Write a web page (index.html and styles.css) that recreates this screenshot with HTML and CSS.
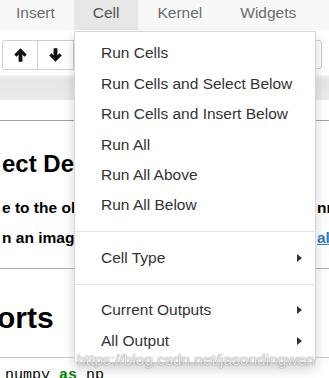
FILE: index.html
```html
<!DOCTYPE html>
<html>
<head>
<meta charset="utf-8">
<link rel="stylesheet" href="styles.css">
</head>
<body>
<div class="page">
  <nav class="menubar">
    <span class="mitem first">Insert</span>
    <span class="mitem active">Cell</span>
    <span class="mitem">Kernel</span>
    <span class="mitem">Widgets</span>
  </nav>
  <div class="toolbar">
    <div class="btn-group">
      <button class="btn btn-left" aria-label="move up">
        <svg width="13" height="14" viewBox="0 0 13 14"><path d="M6.5 0.6 L12.4 6.5 L10.5 8.4 L8.1 6 V13.4 H4.9 V6 L2.5 8.4 L0.6 6.5 Z" fill="#111" stroke="#111" stroke-width="0.6" stroke-linejoin="round"/></svg>
      </button>
      <button class="btn btn-mid" aria-label="move down">
        <svg width="13" height="14" viewBox="0 0 13 14"><path d="M6.5 13.4 L12.4 7.5 L10.5 5.6 L8.1 8 V0.6 H4.9 V8 L2.5 5.6 L0.6 7.5 Z" fill="#111" stroke="#111" stroke-width="0.6" stroke-linejoin="round"/></svg>
      </button>
    </div>
    <div class="btn-group push">
      <button class="btn btn-right" aria-label="more"></button>
    </div>
  </div>
  <div class="band"></div>
  <main class="notebook">
    <div class="cell-top"></div>
    <section class="md">
      <h2 class="title">ect Detection</h2>
      <p class="line"><span class="left">e to the object detection</span><span class="right">nn</span></p>
      <p class="line"><span class="left">n an image using</span><a class="right link" href="#">al</a></p>
    </section>
    <section class="md2">
      <h1 class="big">orts</h1>
    </section>
    <pre class="code">numpy <span class="kw">as</span> np</pre>
  </main>

  <ul class="dropdown">
    <li class="item">Run Cells</li>
    <li class="item">Run Cells and Select Below</li>
    <li class="item">Run Cells and Insert Below</li>
    <li class="item">Run All</li>
    <li class="item">Run All Above</li>
    <li class="item">Run All Below</li>
    <li class="divider"></li>
    <li class="item sub"><span>Cell Type</span><span class="caret"></span></li>
    <li class="divider"></li>
    <li class="item sub"><span>Current Outputs</span><span class="caret"></span></li>
    <li class="item sub"><span>All Output</span><span class="caret"></span></li>
  </ul>

  <div class="watermark">https://blog.csdn.net/jasondingwen</div>
</div>
</body>
</html>
```

FILE: styles.css
```css
html, body {
  margin: 0;
  padding: 0;
  background: #fff;
}
body {
  font-family: "Liberation Sans", Arial, sans-serif;
  color: #000;
  overflow: hidden;
}
.page {
  position: relative;
  width: 329px;
  height: 378px;
  overflow: hidden;
}

/* menu bar */
.menubar {
  display: flex;
  height: 30px;
  background: #f8f8f8;
  font-size: 15.5px;
  color: #6c6c6c;
}
.mitem {
  padding: 0 19px;
  line-height: 26px;
  height: 30px;
  white-space: nowrap;
}
.mitem.first {
  padding-left: 16px;
}
.mitem.active {
  background: #e7e7e7;
  color: #555;
}

/* toolbar */
.toolbar {
  display: flex;
  height: 45px;
  box-sizing: border-box;
  padding: 10px 7px 5px 2px;
  background: #fff;
}
.btn-group {
  display: flex;
}
.btn-group.push {
  margin-left: auto;
}
.btn {
  width: 36px;
  height: 30px;
  margin: 0;
  padding: 0;
  background: #fff;
  border: 1px solid #cfcfcf;
  display: flex;
  align-items: center;
  justify-content: center;
}
.btn-left {
  border-radius: 3px 0 0 3px;
}
.btn-mid {
  margin-left: -1px;
  border-radius: 0;
  width: 37px;
}
.btn-right {
  width: 40px;
  height: 29px;
  border-radius: 0 3px 3px 0;
}

/* gray band */
.band {
  height: 25px;
  background: linear-gradient(#f6f6f6, #e6e6e6 5px, #ebebeb 100%);
}

/* notebook */
.notebook {
  background: #fff;
}
.cell-top {
  height: 20px;
  border-bottom: 1px solid #a3a3a3;
}
.md {
  padding: 28px 0 15px 2px;
  border-bottom: 1px solid #b3b3b3;
}
.title {
  margin: 0 0 14px 0;
  font-size: 24px;
  line-height: 30px;
  font-weight: bold;
  white-space: nowrap;
}
.line {
  display: flex;
  justify-content: space-between;
  margin: 0;
  font-size: 15.5px;
  line-height: 30px;
  font-weight: bold;
  white-space: nowrap;
}
.line .left {
  overflow: hidden;
}
.line .right {
  width: 12px;
  flex: none;
  overflow: hidden;
}
.link {
  color: #337ab7;
  text-decoration: underline;
}
.md2 {
  padding: 29px 0 19px 0;
}
.big {
  margin: 0 0 0 -3px;
  font-size: 30px;
  line-height: 40px;
  font-weight: bold;
  white-space: nowrap;
}
.code {
  margin: 0;
  border-top: 1px solid #cdcdcd;
  padding: 8px 0 0 5px;
  font-family: "Liberation Mono", "Courier New", monospace;
  font-size: 15px;
  line-height: 20px;
  color: #000;
}
.kw {
  color: #008000;
  font-weight: bold;
}

/* dropdown menu */
.dropdown {
  position: absolute;
  left: 74px;
  top: 31px;
  width: 242px;
  box-sizing: border-box;
  margin: 0;
  padding: 6.4px 0;
  list-style: none;
  background: #fff;
  border: 1px solid rgba(0, 0, 0, 0.15);
  border-radius: 0 0 4px 4px;
  box-shadow: 0 6px 12px rgba(0, 0, 0, 0.18);
  font-size: 15.5px;
  color: #333;
}
.item {
  padding: 4px 26px;
  line-height: 22.4px;
  white-space: nowrap;
}
.item.sub {
  display: flex;
  justify-content: space-between;
  align-items: center;
  padding-right: 13px;
}
.caret {
  width: 0;
  height: 0;
  border-top: 4px solid transparent;
  border-bottom: 4px solid transparent;
  border-left: 5px solid #333;
}
.divider {
  height: 1px;
  margin: 10.5px 0;
  background: #e5e5e5;
}

/* watermark */
.watermark {
  position: absolute;
  left: 77px;
  top: 351px;
  font-size: 15.5px;
  line-height: 18px;
  color: rgba(255, 255, 255, 0.85);
  text-shadow: 0 0 1px rgba(0, 0, 0, 0.45), 0 0 2px rgba(0, 0, 0, 0.25);
  white-space: nowrap;
}
```
